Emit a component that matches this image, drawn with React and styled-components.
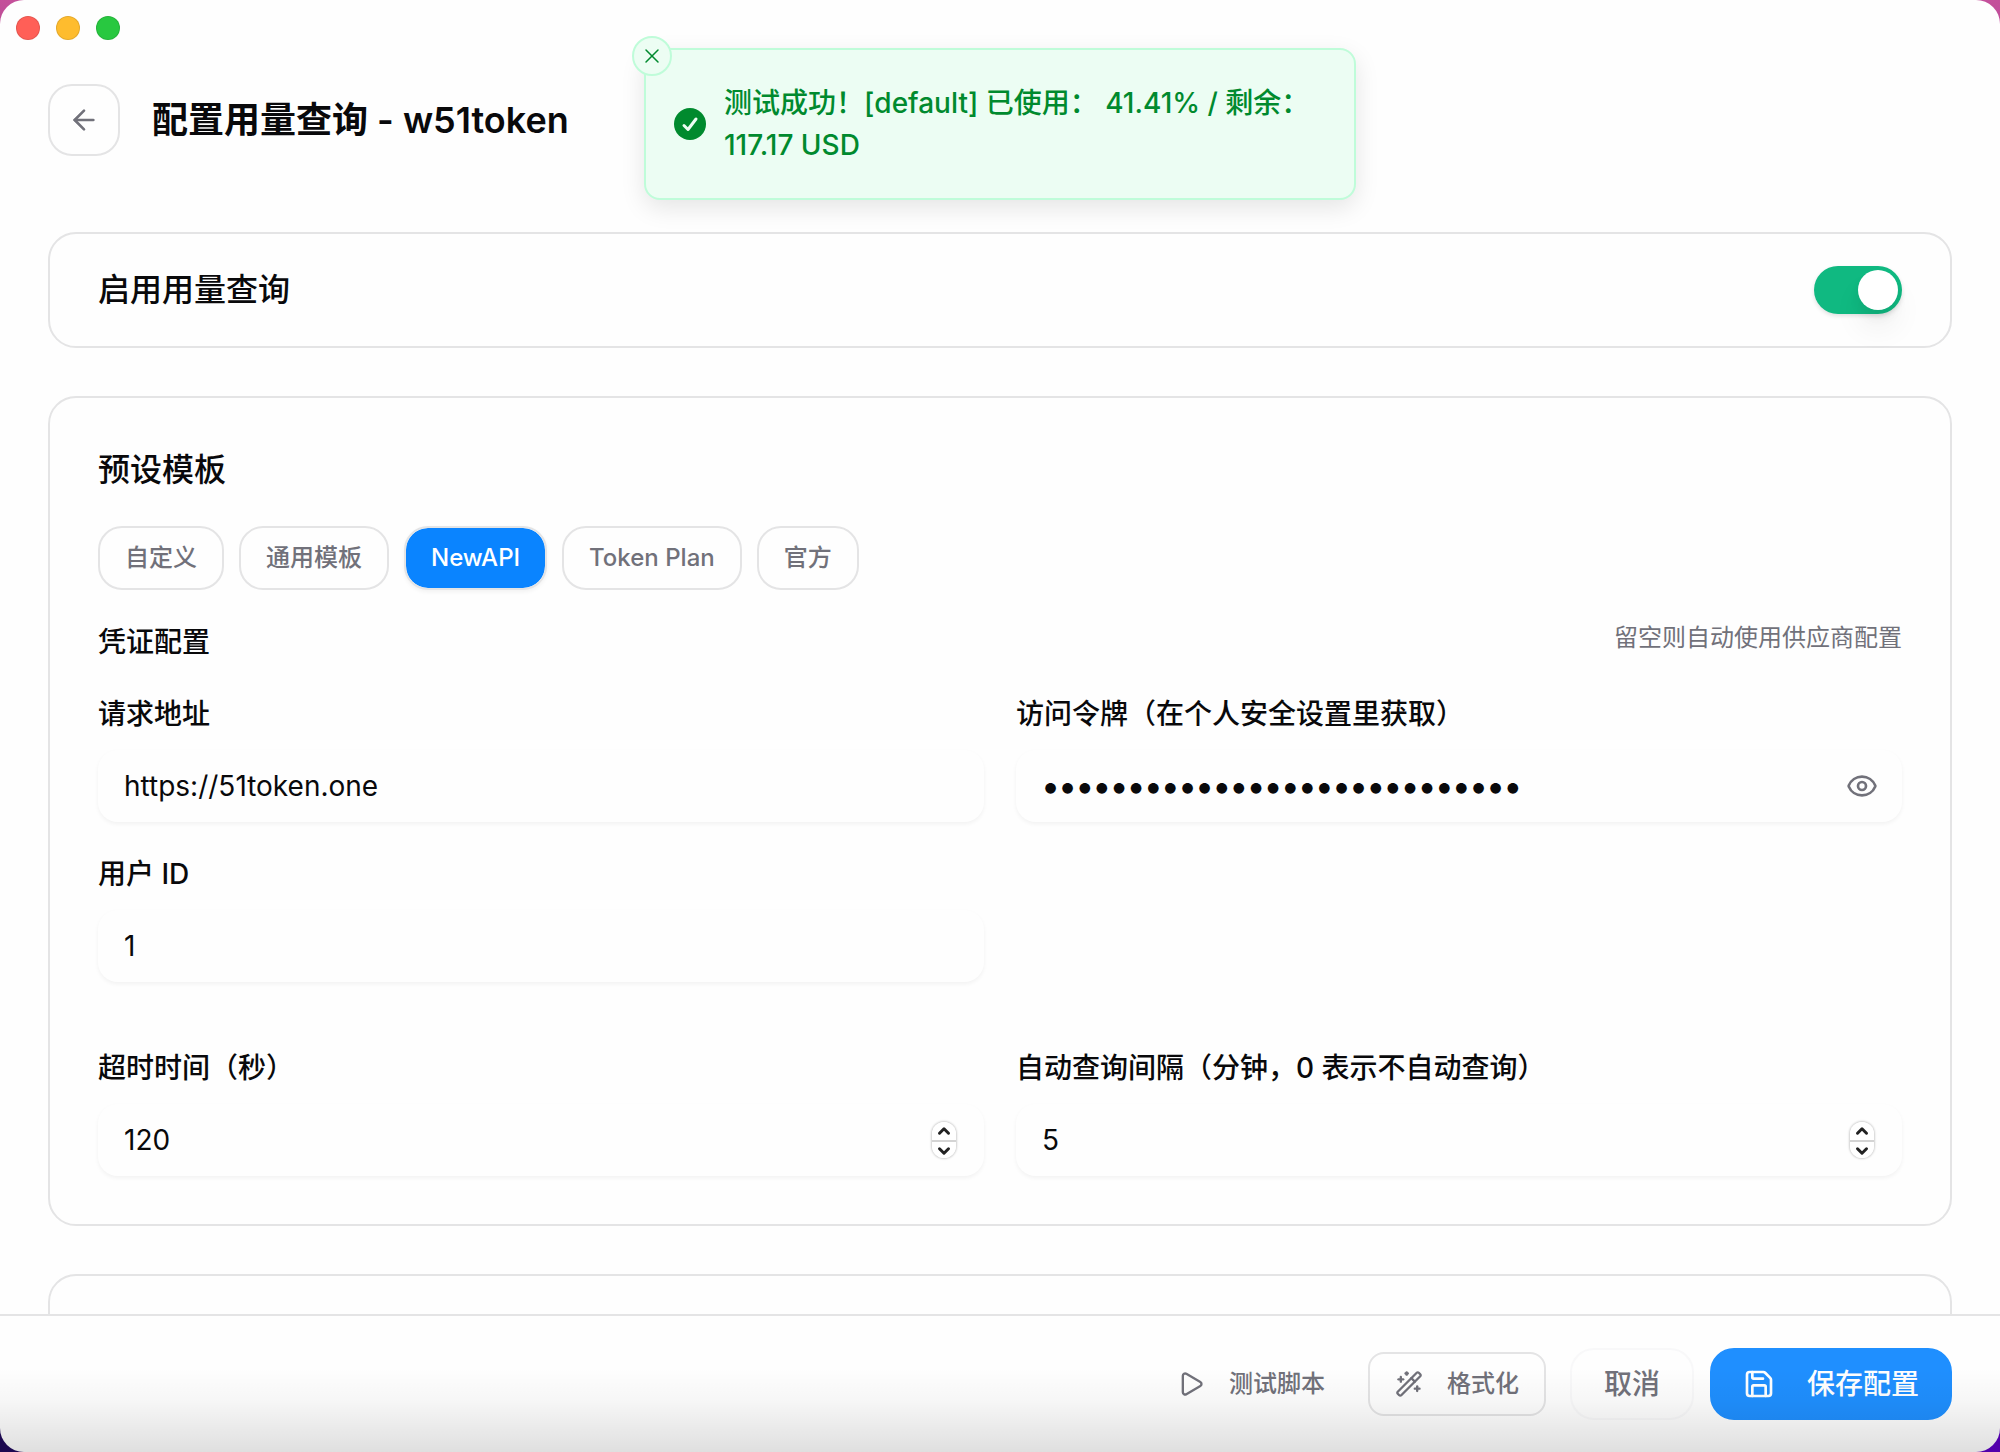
import { ArrowLeft, ChevronDown, ChevronUp, Eye, Play, Save, WandSparkles, X } from 'lucide-react';
import React, { useState } from 'react';
import styled, { createGlobalStyle, css } from 'styled-components';

const colors = {
  text: '#09090b',
  muted: '#71717a',
  border: '#e4e4e5',
  surface: '#fefefe',
  primary: '#0a84ff',
  save: '#1f8fff',
  success: '#008a2e',
  successSurface: '#ecfdf3',
  successBorder: '#bffcd9',
  switchOn: '#10b981',
};

const GlobalStyle = createGlobalStyle`
  * {
    box-sizing: border-box;
  }

  body {
    background:
      linear-gradient(180deg, #c4509a 0%, rgba(196, 80, 154, 0) 40%),
      linear-gradient(90deg, #1c0850 0%, #5200ac 100%);
    color: ${colors.text};
    font-family: Inter, 'Noto Sans CJK SC', sans-serif;
    margin: 0;
  }

  button,
  input {
    font-family: inherit;
  }
`;

const Window = styled.div`
  background: ${colors.surface};
  border-radius: 24px;
  display: flex;
  flex-direction: column;
  height: 100vh;
  overflow: hidden;
  position: relative;
`;

const TitleBar = styled.div`
  display: flex;
  flex: none;
  gap: 16px;
  padding: 16px;
`;

const TrafficLight = styled.button`
  background: ${({ $color }) => $color};
  border: 1px solid rgba(0, 0, 0, 0.1);
  border-radius: 50%;
  height: 24px;
  padding: 0;
  width: 24px;
`;

const Header = styled.header`
  align-items: center;
  display: flex;
  flex: none;
  gap: 32px;
  padding: 28px 48px 76px;
`;

const BackButton = styled.button`
  align-items: center;
  background: none;
  border: 2px solid ${colors.border};
  border-radius: 24px;
  color: ${colors.muted};
  display: flex;
  height: 72px;
  justify-content: center;
  width: 72px;
`;

const Title = styled.h1`
  font-size: 36px;
  font-weight: 600;
  line-height: 56px;
  margin: 0;
`;

const Content = styled.main`
  display: flex;
  flex: 1;
  flex-direction: column;
  gap: 48px;
  min-height: 0;
  overflow: hidden;
  padding: 0 48px;
`;

const Card = styled.section`
  border: 2px solid ${colors.border};
  border-radius: 28px;
  display: flex;
  flex: none;
  flex-direction: column;
  gap: 32px;
  min-height: 116px;
  padding: 48px;
`;

const SwitchCard = styled(Card)`
  align-items: center;
  flex-direction: row;
  justify-content: space-between;
  padding: 32px 48px;
`;

const heading = css`
  font-size: 32px;
  font-weight: 500;
  line-height: 48px;
  margin: 0;
`;

const SwitchLabel = styled.label`
  ${heading}
`;

const CardTitle = styled.h2`
  ${heading}
`;

const Switch = styled.input`
  appearance: none;
  background: #d4d4d8;
  border-radius: 24px;
  box-shadow: 0 2px 4px rgba(0, 0, 0, 0.12);
  height: 48px;
  margin: 0;
  padding: 4px;
  width: 88px;

  &::before {
    background: #fff;
    border-radius: 50%;
    box-shadow: 0 20px 30px rgba(0, 0, 0, 0.06), 0 8px 12px rgba(0, 0, 0, 0.05);
    content: '';
    display: block;
    height: 40px;
    width: 40px;
  }

  &:checked {
    background: ${colors.switchOn};
  }

  &:checked::before {
    margin-left: 40px;
  }
`;

const ChipRow = styled.div`
  display: flex;
  gap: 15px;
`;

const Chip = styled.button`
  background: none;
  border: 2px solid ${colors.border};
  border-radius: 24px;
  color: ${colors.muted};
  font-size: 24px;
  font-weight: 500;
  height: 64px;
  line-height: 32px;
  padding: 0 25px;

  ${({ $active }) =>
    $active &&
    css`
      background: ${colors.primary} padding-box;
      box-shadow: 0 2px 4px rgba(0, 0, 0, 0.05);
      color: #fff;
    `}
`;

const SectionHeader = styled.div`
  align-items: flex-start;
  display: flex;
  justify-content: space-between;
`;

const SectionTitle = styled.h3`
  font-size: 28px;
  font-weight: 500;
  line-height: 40px;
  margin: 0;
`;

const Note = styled.span`
  color: ${colors.muted};
  font-size: 24px;
  line-height: 32px;
`;

const FieldGrid = styled.div`
  display: grid;
  gap: 32px;
  grid-template-columns: 1fr 1fr;
`;

const TimingGrid = styled(FieldGrid)`
  padding-top: 34px;
`;

const Field = styled.div`
  display: flex;
  flex-direction: column;
  gap: 16px;
`;

const FieldLabel = styled.label`
  font-size: 28px;
  font-weight: 500;
  line-height: 40px;
`;

const InputBox = styled.div`
  align-items: center;
  border-radius: 20px;
  box-shadow: 0 2px 4px rgba(0, 0, 0, 0.05);
  display: flex;
  height: 72px;
  padding: 0 24px 0 26px;
`;

const Input = styled.input`
  appearance: textfield;
  background: none;
  border: 0;
  color: ${colors.text};
  flex: 1;
  font-size: 28px;
  line-height: 40px;
  min-width: 0;
  outline: 0;
  padding: 0;

  &[type='password'] {
    font-size: 34px;
    font-weight: 600;
  }

  &::-webkit-inner-spin-button {
    display: none;
  }
`;

const IconButton = styled.button`
  background: none;
  border: 0;
  color: ${colors.muted};
  display: flex;
  padding: 0;
`;

const Stepper = styled.div`
  border-radius: 12px;
  box-shadow: 0 0 2px 1px rgba(0, 0, 0, 0.18);
  display: flex;
  flex-direction: column;
  height: 36px;
  margin-right: 4px;
  overflow: hidden;
  width: 24px;
`;

const StepButton = styled.button`
  align-items: center;
  background: #fff;
  border: 0;
  color: #222;
  display: flex;
  flex: 1;
  justify-content: center;
  padding: 0;

  & + & {
    border-top: 2px solid #d4d4d4;
  }
`;

const Footer = styled.footer`
  align-items: center;
  border-top: 2px solid ${colors.border};
  display: flex;
  flex: none;
  gap: 16px;
  justify-content: flex-end;
  padding: 32px 48px;
`;

const ToolButton = styled.button`
  align-items: center;
  background: none;
  border: 2px solid ${({ $outlined }) => ($outlined ? colors.border : 'transparent')};
  border-radius: 16px;
  color: ${colors.muted};
  display: flex;
  font-size: 24px;
  font-weight: 500;
  gap: 24px;
  height: 64px;
  line-height: 32px;
  padding: 0 25px;
`;

const ActionButton = styled.button`
  align-items: center;
  background: ${({ $primary }) => ($primary ? colors.save : 'none')};
  border: 2px solid ${({ $primary }) => ($primary ? colors.save : '#f8f8f9')};
  border-radius: 24px;
  color: ${({ $primary }) => ($primary ? '#fff' : colors.muted)};
  display: flex;
  font-size: 28px;
  font-weight: 500;
  gap: 32px;
  height: 72px;
  line-height: 40px;
  padding: 0 ${({ $primary }) => ($primary ? 31 : 32)}px;
`;

const ToolGroup = styled.div`
  display: flex;
  gap: 16px;
  margin-right: 8px;
`;

const BottomShade = styled.div`
  background: linear-gradient(
    180deg,
    rgba(0, 0, 0, 0) 0%,
    rgba(0, 0, 0, 0.03) 40%,
    rgba(0, 0, 0, 0.12) 100%
  );
  bottom: 0;
  height: 84px;
  left: 0;
  pointer-events: none;
  position: absolute;
  right: 0;
`;

const Toast = styled.div`
  align-items: center;
  background: ${colors.successSurface};
  border: 2px solid ${colors.successBorder};
  border-radius: 16px;
  box-shadow: 0 8px 24px rgba(0, 0, 0, 0.1);
  color: ${colors.success};
  display: flex;
  font-size: 28px;
  font-weight: 500;
  gap: 18px;
  left: 50%;
  line-height: 42px;
  min-height: 152px;
  padding: 32px 28px;
  position: absolute;
  top: 48px;
  transform: translateX(-50%);
  width: 712px;
`;

const ToastClose = styled.button`
  align-items: center;
  background: ${colors.successSurface};
  border: 2px solid ${colors.successBorder};
  border-radius: 50%;
  color: ${colors.success};
  display: flex;
  height: 40px;
  justify-content: center;
  left: -14px;
  padding: 0;
  position: absolute;
  top: -14px;
  width: 40px;
`;

const ToastIcon = styled.svg`
  flex: none;
  height: 32px;
  width: 32px;
`;

const TEMPLATES = ['自定义', '通用模板', 'NewAPI', 'Token Plan', '官方'];

const NumberField = ({ id, label, value, onChange }) => (
  <Field>
    <FieldLabel htmlFor={id}>{label}</FieldLabel>
    <InputBox>
      <Input
        id={id}
        type="number"
        value={value}
        onChange={(e) => onChange(Number(e.target.value))}
      />
      <Stepper>
        <StepButton type="button" aria-label="+" onClick={() => onChange(value + 1)}>
          <ChevronUp size={18} strokeWidth={4} />
        </StepButton>
        <StepButton type="button" aria-label="-" onClick={() => onChange(Math.max(0, value - 1))}>
          <ChevronDown size={18} strokeWidth={4} />
        </StepButton>
      </Stepper>
    </InputBox>
  </Field>
);

const SuccessToast = ({ onClose }) => (
  <Toast role="status">
    <ToastClose type="button" aria-label="close" onClick={onClose}>
      <X size={24} strokeWidth={1.5} />
    </ToastClose>
    <ToastIcon viewBox="0 0 32 32">
      <circle cx="16" cy="16" r="16" fill="currentColor" />
      <path
        d="M10 17.5l4 4 8-10.5"
        fill="none"
        stroke={colors.successSurface}
        strokeWidth="3"
        strokeLinecap="round"
        strokeLinejoin="round"
      />
    </ToastIcon>
    <span>测试成功！[default] 已使用： 41.41% / 剩余：117.17 USD</span>
  </Toast>
);

const App = () => {
  const [enabled, setEnabled] = useState(true);
  const [template, setTemplate] = useState('NewAPI');
  const [baseUrl, setBaseUrl] = useState('https://51token.one');
  const [token, setToken] = useState('0123456789abcdef0123456789ab');
  const [showToken, setShowToken] = useState(false);
  const [userId, setUserId] = useState('1');
  const [timeout, setTimeoutValue] = useState(120);
  const [interval, setIntervalValue] = useState(5);
  const [toastOpen, setToastOpen] = useState(true);

  return (
    <>
      <GlobalStyle />
      <Window>
        <TitleBar>
          <TrafficLight $color="#ff5f57" aria-label="close window" />
          <TrafficLight $color="#febc2e" aria-label="minimize window" />
          <TrafficLight $color="#28c840" aria-label="zoom window" />
        </TitleBar>
        <Header>
          <BackButton type="button" aria-label="back">
            <ArrowLeft size={32} strokeWidth={2} />
          </BackButton>
          <Title>配置用量查询 - w51token</Title>
        </Header>
        <Content>
          <SwitchCard>
            <SwitchLabel htmlFor="enabled">启用用量查询</SwitchLabel>
            <Switch
              id="enabled"
              type="checkbox"
              role="switch"
              checked={enabled}
              onChange={(e) => setEnabled(e.target.checked)}
            />
          </SwitchCard>
          <Card>
            <CardTitle>预设模板</CardTitle>
            <ChipRow>
              {TEMPLATES.map((name) => (
                <Chip
                  key={name}
                  type="button"
                  $active={name === template}
                  onClick={() => setTemplate(name)}
                >
                  {name}
                </Chip>
              ))}
            </ChipRow>
            <SectionHeader>
              <SectionTitle>凭证配置</SectionTitle>
              <Note>留空则自动使用供应商配置</Note>
            </SectionHeader>
            <FieldGrid>
              <Field>
                <FieldLabel htmlFor="base-url">请求地址</FieldLabel>
                <InputBox>
                  <Input
                    id="base-url"
                    type="text"
                    value={baseUrl}
                    onChange={(e) => setBaseUrl(e.target.value)}
                  />
                </InputBox>
              </Field>
              <Field>
                <FieldLabel htmlFor="token">访问令牌（在个人安全设置里获取）</FieldLabel>
                <InputBox>
                  <Input
                    id="token"
                    type={showToken ? 'text' : 'password'}
                    value={token}
                    onChange={(e) => setToken(e.target.value)}
                  />
                  <IconButton
                    type="button"
                    aria-label="show token"
                    onClick={() => setShowToken(!showToken)}
                  >
                    <Eye size={32} />
                  </IconButton>
                </InputBox>
              </Field>
              <Field>
                <FieldLabel htmlFor="user-id">用户 ID</FieldLabel>
                <InputBox>
                  <Input
                    id="user-id"
                    type="text"
                    value={userId}
                    onChange={(e) => setUserId(e.target.value)}
                  />
                </InputBox>
              </Field>
            </FieldGrid>
            <TimingGrid>
              <NumberField
                id="timeout"
                label="超时时间（秒）"
                value={timeout}
                onChange={setTimeoutValue}
              />
              <NumberField
                id="interval"
                label="自动查询间隔（分钟，0 表示不自动查询）"
                value={interval}
                onChange={setIntervalValue}
              />
            </TimingGrid>
          </Card>
          <Card />
        </Content>
        <Footer>
          <ToolGroup>
            <ToolButton type="button">
              <Play size={28} />
              测试脚本
            </ToolButton>
            <ToolButton type="button" $outlined>
              <WandSparkles size={28} />
              格式化
            </ToolButton>
          </ToolGroup>
          <ActionButton type="button">取消</ActionButton>
          <ActionButton type="button" $primary>
            <Save size={32} />
            保存配置
          </ActionButton>
        </Footer>
        <BottomShade />
        {toastOpen && <SuccessToast onClose={() => setToastOpen(false)} />}
      </Window>
    </>
  );
};

export default App;
